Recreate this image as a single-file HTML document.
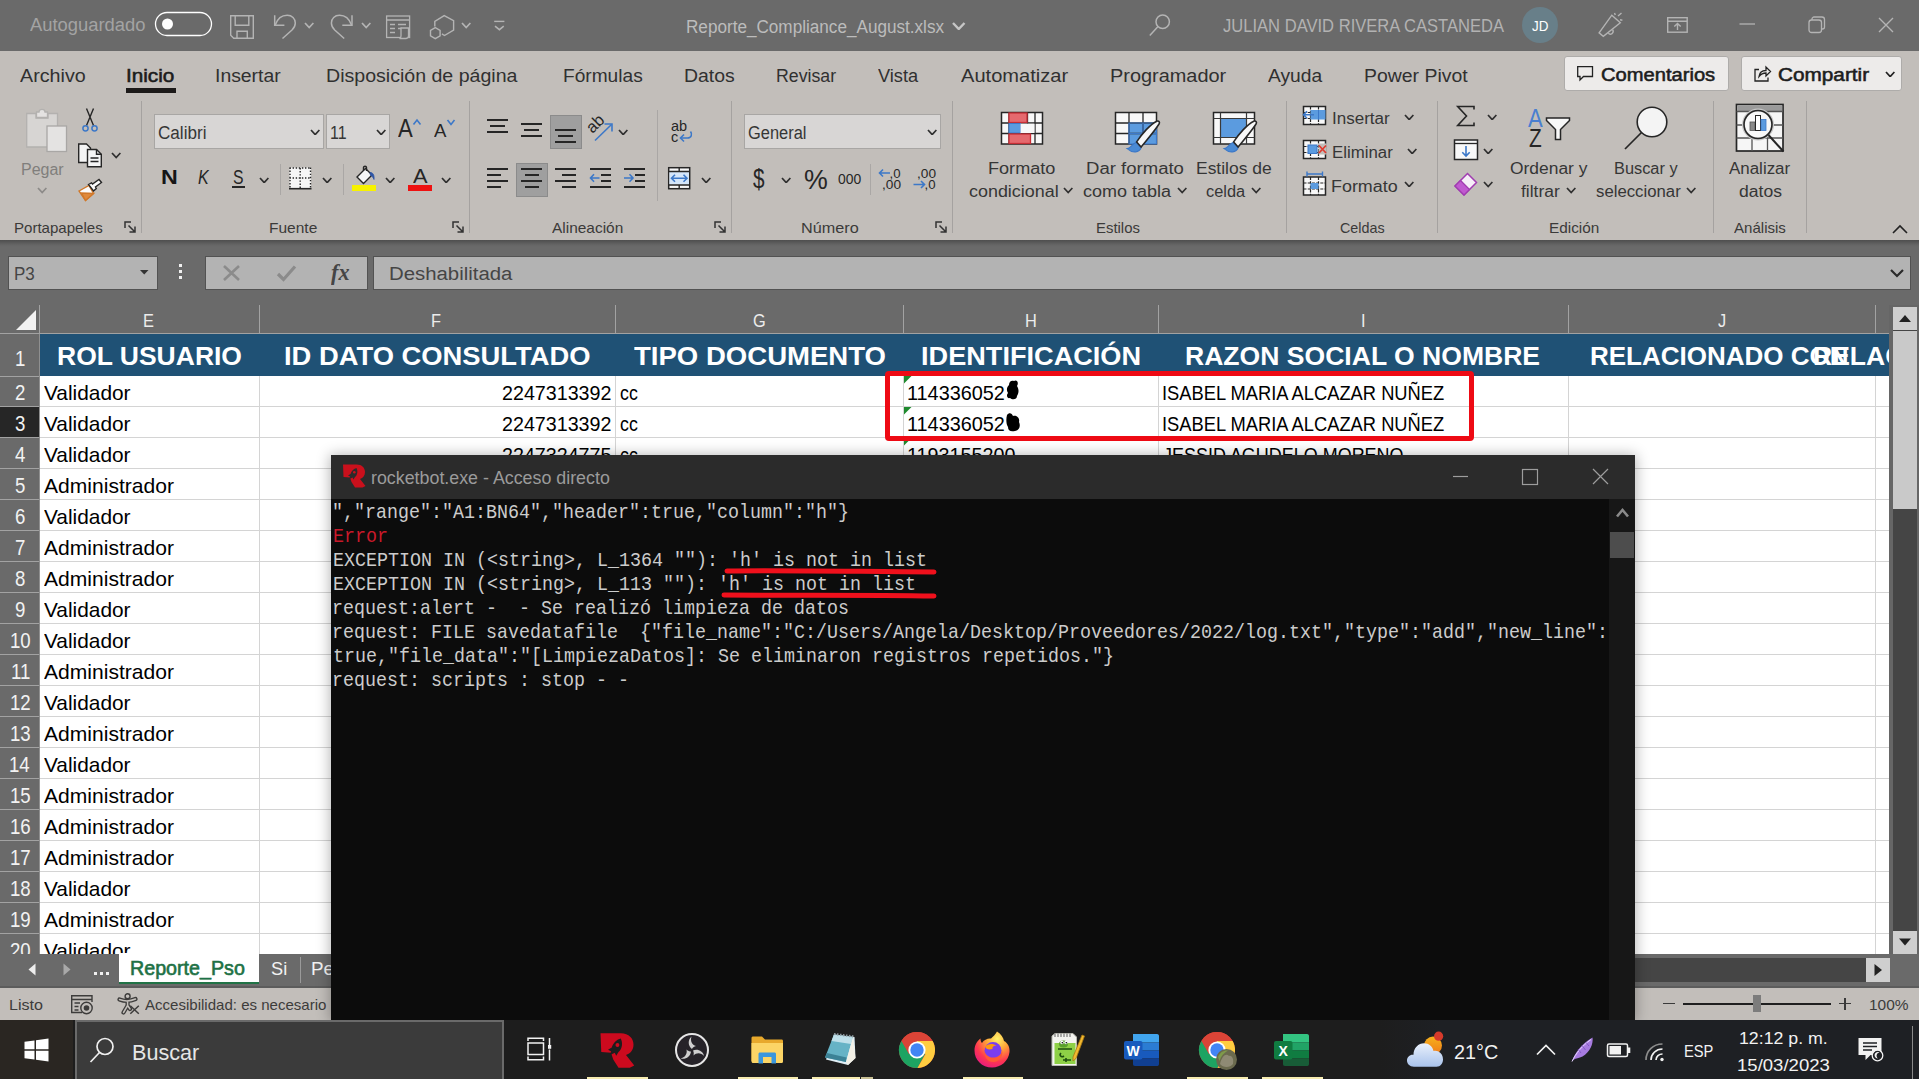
<!DOCTYPE html>
<html lang="es"><head><meta charset="utf-8"><title>Reporte_Compliance_August.xlsx - Excel</title>
<style>
html,body{margin:0;padding:0;}
body{width:1919px;height:1079px;overflow:hidden;position:relative;background:#000;font-family:"Liberation Sans",sans-serif;}
.a{position:absolute;box-sizing:border-box;}
.t{position:absolute;line-height:1;white-space:pre;transform-origin:0 0;}
.mono{font-family:"Liberation Mono",monospace;}
.serif{font-family:"Liberation Serif",serif;}

</style></head><body>
<div class="a" style="left:0px;top:0px;width:1919px;height:51px;background:#6a6a6a;"></div>
<div class="a" style="left:0px;top:51px;width:1919px;height:189px;background:#c2beba;"></div>
<div class="a" style="left:0px;top:240px;width:1919px;height:65px;background:#6a6a6a;background:linear-gradient(#4e4e4e,#666 5px,#6a6a6a 7px);"></div>
<div class="a" style="left:0px;top:305px;width:1919px;height:29px;background:#6a6a6a;"></div>
<div class="a" style="left:0px;top:334px;width:1919px;height:620px;background:#6a6a6a;"></div>
<div class="a" style="left:0px;top:953px;width:1919px;height:34px;background:#6a6a6a;"></div>
<div class="a" style="left:0px;top:987px;width:1919px;height:33px;background:#c2beba;"></div>
<div class="a" style="left:0px;top:1020px;width:1919px;height:59px;background:#1d1d1d;"></div>
<span class="t" style="left:29.50px;top:16.00px;font-size:18px;color:#a3a3a3;transform:scaleX(1.0213);">Autoguardado</span>
<svg class="a" style="left:154px;top:11px;" width="60" height="27" viewBox="0 0 60 27"><rect x="1.5" y="1.5" width="56" height="23" rx="11.5" fill="none" stroke="#fff" stroke-width="1.3"/><circle cx="13.5" cy="13" r="5.5" fill="#fff"/></svg>
<svg class="a" style="left:229px;top:14px;" width="27" height="27" viewBox="0 0 27 27"><g fill="none" stroke="#b4b4b4" stroke-width="1.400"><path d="M1.700 1.700 H24.300 V24.300 H4.700 L1.700 21.300 Z"/><path d="M6.200 1.700 V11.300 H19.800 V1.700"/><path d="M8 24.300 V17.200 H18.300 V24.300"/></g></svg>
<svg class="a" style="left:272px;top:13px;" width="26" height="28" viewBox="0 0 26 28"><g fill="none" stroke="#b4b4b4" stroke-width="1.500"><path d="M2.700 2.200 V12.300 H12.400"/><path d="M3.200 12 C5.500 5.500 10 2.200 15.200 2.200 C20 2.200 23.300 5.500 23.300 10 C23.300 13 22 15 20 17 L10.500 25.500"/></g></svg>
<svg class="a" style="left:303.8px;top:22.2px;" width="10.4" height="6.6" viewBox="0 0 10.4 6.6"><path d="M1 1 L5.2 5.6 L9.4 1" fill="none" stroke="#b4b4b4" stroke-width="1.7"/></svg>
<svg class="a" style="left:329px;top:13px;" width="26" height="28" viewBox="0 0 26 28"><g fill="none" stroke="#b4b4b4" stroke-width="1.500" transform="translate(25.700 0) scale(-1 1)"><path d="M2.700 2.200 V12.300 H12.400"/><path d="M3.200 12 C5.500 5.500 10 2.200 15.200 2.200 C20 2.200 23.300 5.500 23.300 10 C23.300 13 22 15 20 17 L10.500 25.500"/></g></svg>
<svg class="a" style="left:360.8px;top:22.2px;" width="10.4" height="6.6" viewBox="0 0 10.4 6.6"><path d="M1 1 L5.2 5.6 L9.4 1" fill="none" stroke="#b4b4b4" stroke-width="1.7"/></svg>
<svg class="a" style="left:385px;top:14px;" width="27" height="27" viewBox="0 0 27 27"><g fill="none" stroke="#b4b4b4" stroke-width="1.3"><rect x="1.600" y="2" width="23" height="21.500"/><path d="M1.600 6 H24.600 M5 10.500 H10 M13 10.500 H21 M5 14.500 H10 M13 14.500 H17 M5 18.500 H10"/><path d="M16 14 H23.500 V22 C23.500 24 21 24.500 21 24.500 H14.500 C14.500 24.500 16 24 16 22 Z" fill="#6a6a6a"/></g></svg>
<svg class="a" style="left:428px;top:14px;" width="28" height="27" viewBox="0 0 28 27"><g fill="none" stroke="#b4b4b4" stroke-width="1.400"><path d="M6.800 12.500 V7.400 L16.200 1.600 L25.600 6.600 V16 L16.500 21.500 L13.900 19.900"/><path d="M7.300 13.600 L12.100 16.350 V21.850 L7.300 24.600 L2.500 21.850 V16.350 Z"/></g></svg>
<svg class="a" style="left:460.8px;top:22.2px;" width="10.4" height="6.6" viewBox="0 0 10.4 6.6"><path d="M1 1 L5.2 5.6 L9.4 1" fill="none" stroke="#b4b4b4" stroke-width="1.7"/></svg>
<svg class="a" style="left:493px;top:20px;" width="14" height="12" viewBox="0 0 14 12"><path d="M1.200 1.400 H11.400" stroke="#b4b4b4" stroke-width="1.400"/><path d="M2 6.100 L6.400 9.700 L10.750 6.100" fill="none" stroke="#b4b4b4" stroke-width="1.500"/></svg>
<span class="t" style="left:686.25px;top:17.60px;font-size:18px;color:#bcbcbc;transform:scaleX(0.9517);">Reporte_Compliance_August.xlsx</span>
<svg class="a" style="left:952.0px;top:22.1px;" width="13.5" height="8" viewBox="0 0 13.5 8"><path d="M1 1 L6.75 7 L12.5 1" fill="none" stroke="#c6c6c6" stroke-width="2.4"/></svg>
<svg class="a" style="left:1148px;top:13px;" width="24" height="25" viewBox="0 0 24 25"><g fill="none" stroke="#b4b4b4" stroke-width="1.5"><circle cx="14.700" cy="8.700" r="6.700"/><path d="M10 13.500 L1.800 22.500"/></g></svg>
<span class="t" style="left:1223.00px;top:17.00px;font-size:18px;color:#b2b2b2;transform:scaleX(0.9204);">JULIAN DAVID RIVERA CASTANEDA</span>
<div class="a" style="left:1522px;top:7px;width:36px;height:36px;background:#687f89;border-radius:50%;"></div>
<span class="t" style="left:1532.00px;top:18.50px;font-size:14.5px;color:#fff;transform:scaleX(0.9275);">JD</span>
<svg class="a" style="left:1597px;top:12px;" width="28" height="27" viewBox="0 0 28 27"><g fill="none" stroke="#b4b4b4" stroke-width="1.400"><path d="M14.800 3.200 L23.300 10.700 L6.300 24.400 L2.100 20.900 Z"/><path d="M11.300 21.300 C13.500 23.500 17.500 21 15.700 17.700"/><path d="M17.500 1 L18.300 3.100 M21 4 L24.500 1 M23 7.700 L25.400 8.200"/></g></svg>
<svg class="a" style="left:1666px;top:16px;" width="23" height="18" viewBox="0 0 23 18"><g fill="none" stroke="#b4b4b4" stroke-width="1.4"><rect x="1.700" y="1.700" width="19.500" height="14.500"/><path d="M1.700 5.200 H21.200 M11.500 14 V7.500 M8.300 10.500 L11.500 7.500 L14.700 10.500"/></g></svg>
<svg class="a" style="left:1738px;top:22px;" width="19" height="4" viewBox="0 0 19 4"><path d="M1.500 2 H17" stroke="#b4b4b4" stroke-width="1.3"/></svg>
<svg class="a" style="left:1807px;top:15px;" width="20" height="20" viewBox="0 0 20 20"><g fill="none" stroke="#b4b4b4" stroke-width="1.3"><rect x="2" y="5" width="12.500" height="12.500" rx="2.500"/><path d="M5 5 V4 C5 3 6 2 7 2 H15 C16.500 2 17.500 3 17.500 4.500 V12 C17.500 13 16.500 14 15.500 14 H14.500"/></g></svg>
<svg class="a" style="left:1877px;top:16px;" width="18" height="18" viewBox="0 0 18 18"><path d="M2 2 L16 16 M16 2 L2 16" stroke="#b4b4b4" stroke-width="1.400" fill="none"/></svg>
<span class="t" style="left:19.50px;top:67.00px;font-size:18.3px;color:#303030;transform:scaleX(1.0775);">Archivo</span>
<span class="t" style="left:214.94px;top:67.00px;font-size:18.3px;color:#303030;transform:scaleX(1.0593);">Insertar</span>
<span class="t" style="left:326.13px;top:67.00px;font-size:18.3px;color:#303030;transform:scaleX(1.0700);">Disposición de página</span>
<span class="t" style="left:562.95px;top:67.00px;font-size:18.3px;color:#303030;transform:scaleX(1.0460);">Fórmulas</span>
<span class="t" style="left:683.94px;top:67.00px;font-size:18.3px;color:#303030;transform:scaleX(1.0619);">Datos</span>
<span class="t" style="left:776.03px;top:67.00px;font-size:18.3px;color:#303030;transform:scaleX(0.9691);">Revisar</span>
<span class="t" style="left:878.00px;top:67.00px;font-size:18.3px;color:#303030;transform:scaleX(0.9965);">Vista</span>
<span class="t" style="left:961.00px;top:67.00px;font-size:18.3px;color:#303030;transform:scaleX(1.0980);">Automatizar</span>
<span class="t" style="left:1109.91px;top:67.00px;font-size:18.3px;color:#303030;transform:scaleX(1.0890);">Programador</span>
<span class="t" style="left:1267.50px;top:67.00px;font-size:18.3px;color:#303030;transform:scaleX(1.0509);">Ayuda</span>
<span class="t" style="left:1364.44px;top:67.00px;font-size:18.3px;color:#303030;transform:scaleX(1.0626);">Power Pivot</span>
<span class="t" style="left:125.87px;top:67.00px;font-size:18.3px;color:#1c1c1c;transform:scaleX(1.1323);-webkit-text-stroke:0.55px #1c1c1c;">Inicio</span>
<div class="a" style="left:126px;top:88px;width:50px;height:4.5px;background:#1c1a19;"></div>
<div class="a" style="left:1564px;top:55.5px;width:164.5px;height:35px;background:#edebea;border:1px solid #aeacaa;border-radius:3px;"></div>
<svg class="a" style="left:1576px;top:65px;" width="19" height="18" viewBox="0 0 19 18"><path d="M1.700 1.700 H16.500 V11.500 H7.500 L4 15 V11.500 H1.700 Z" fill="none" stroke="#222" stroke-width="1.300"/></svg>
<span class="t" style="left:1601.00px;top:66.00px;font-size:18.3px;color:#1d1d1d;transform:scaleX(1.1015);-webkit-text-stroke:0.55px #1d1d1d;">Comentarios</span>
<div class="a" style="left:1740.5px;top:55.5px;width:161px;height:35px;background:#edebea;border:1px solid #aeacaa;border-radius:3px;"></div>
<svg class="a" style="left:1753px;top:64px;" width="19" height="19" viewBox="0 0 19 19"><g fill="none" stroke="#222" stroke-width="1.300"><path d="M6 5.500 H2 V17 H15 V13.500"/><path d="M6 12.500 C6.500 8.500 9.500 6.500 13 6.500 V3 L17.500 7.500 L13 12 V9 C10 9 8 10 6 12.500 Z"/></g></svg>
<span class="t" style="left:1778.00px;top:66.00px;font-size:18.3px;color:#1d1d1d;transform:scaleX(1.1352);-webkit-text-stroke:0.55px #1d1d1d;">Compartir</span>
<svg class="a" style="left:1884.8px;top:70.7px;" width="10.4" height="6.6" viewBox="0 0 10.4 6.6"><path d="M1 1 L5.2 5.6 L9.4 1" fill="none" stroke="#222" stroke-width="1.7"/></svg>
<div class="a" style="left:141px;top:101px;width:1px;height:132px;background:#a5a2a0;"></div>
<div class="a" style="left:469px;top:101px;width:1px;height:132px;background:#a5a2a0;"></div>
<div class="a" style="left:731px;top:101px;width:1px;height:132px;background:#a5a2a0;"></div>
<div class="a" style="left:952px;top:101px;width:1px;height:132px;background:#a5a2a0;"></div>
<div class="a" style="left:1286px;top:101px;width:1px;height:132px;background:#a5a2a0;"></div>
<div class="a" style="left:1437px;top:101px;width:1px;height:132px;background:#a5a2a0;"></div>
<div class="a" style="left:1713px;top:101px;width:1px;height:132px;background:#a5a2a0;"></div>
<div class="a" style="left:1806px;top:101px;width:1px;height:132px;background:#a5a2a0;"></div>
<div class="a" style="left:280px;top:164px;width:1px;height:31px;background:#aaa7a5;"></div>
<div class="a" style="left:343px;top:164px;width:1px;height:31px;background:#aaa7a5;"></div>
<div class="a" style="left:870px;top:164px;width:1px;height:31px;background:#aaa7a5;"></div>
<div class="a" style="left:657px;top:110px;width:1px;height:91px;background:#aaa7a5;"></div>
<svg class="a" style="left:124px;top:221px;" width="13" height="13" viewBox="0 0 13 13"><g fill="none" stroke="#333" stroke-width="1.500"><path d="M1 7 V1 H7"/><path d="M4.500 4.500 L11 11 M11 5.500 V11 H5.500"/></g></svg>
<svg class="a" style="left:452px;top:221px;" width="13" height="13" viewBox="0 0 13 13"><g fill="none" stroke="#333" stroke-width="1.500"><path d="M1 7 V1 H7"/><path d="M4.500 4.500 L11 11 M11 5.500 V11 H5.500"/></g></svg>
<svg class="a" style="left:714px;top:221px;" width="13" height="13" viewBox="0 0 13 13"><g fill="none" stroke="#333" stroke-width="1.500"><path d="M1 7 V1 H7"/><path d="M4.500 4.500 L11 11 M11 5.500 V11 H5.500"/></g></svg>
<svg class="a" style="left:935px;top:221px;" width="13" height="13" viewBox="0 0 13 13"><g fill="none" stroke="#333" stroke-width="1.500"><path d="M1 7 V1 H7"/><path d="M4.500 4.500 L11 11 M11 5.500 V11 H5.500"/></g></svg>
<span class="t" style="left:13.68px;top:220.70px;font-size:14.8px;color:#3b3a39;transform:scaleX(1.0175);">Portapapeles</span>
<span class="t" style="left:268.95px;top:220.70px;font-size:14.8px;color:#3b3a39;transform:scaleX(1.0482);">Fuente</span>
<span class="t" style="left:552.00px;top:220.70px;font-size:14.8px;color:#3b3a39;transform:scaleX(1.0434);">Alineación</span>
<span class="t" style="left:800.60px;top:220.70px;font-size:14.8px;color:#3b3a39;transform:scaleX(1.0954);">Número</span>
<span class="t" style="left:1096.49px;top:220.70px;font-size:14.8px;color:#3b3a39;transform:scaleX(1.0075);">Estilos</span>
<span class="t" style="left:1339.70px;top:220.70px;font-size:14.8px;color:#3b3a39;transform:scaleX(0.9702);">Celdas</span>
<span class="t" style="left:1548.96px;top:220.70px;font-size:14.8px;color:#3b3a39;transform:scaleX(1.0359);">Edición</span>
<span class="t" style="left:1733.50px;top:220.70px;font-size:14.8px;color:#3b3a39;transform:scaleX(1.0180);">Análisis</span>
<svg class="a" style="left:1891px;top:224px;" width="18" height="11" viewBox="0 0 18 11"><path d="M2 9 L9 2 L16 9" fill="none" stroke="#222" stroke-width="1.600"/></svg>
<svg class="a" style="left:24px;top:105px;" width="46" height="50" viewBox="0 0 46 50"><g stroke-width="1.300">
<path d="M2.700 8.500 H12 V13 H24 V8.500 H33.500 V42 H2.700 Z" fill="#d7d5d3" stroke="#b3b1af"/>
<path d="M12.500 12.500 V7 H15 C15 3.500 21 3.500 21 7 H23.500 V12.500 Z" fill="#e4e2e1" stroke="#b3b1af"/>
<rect x="23" y="21" width="19.500" height="25.500" fill="#e4e3e2" stroke="#a9a7a5"/></g></svg>
<span class="t" style="left:21.07px;top:160.60px;font-size:17.3px;color:#807e7c;transform:scaleX(0.9259);">Pegar</span>
<svg class="a" style="left:36.8px;top:187.3px;" width="10.4" height="6.6" viewBox="0 0 10.4 6.6"><path d="M1 1 L5.2 5.6 L9.4 1" fill="none" stroke="#8c8a88" stroke-width="1.7"/></svg>
<svg class="a" style="left:80px;top:106px;" width="20" height="28" viewBox="0 0 20 28"><g fill="none"><path d="M6.500 2.500 L13.500 19.500 M13.500 2.500 L6.500 19.500" stroke="#262626" stroke-width="1.400"/>
<circle cx="5.500" cy="22.300" r="2.600" stroke="#3c78c8" stroke-width="1.500"/><circle cx="14.500" cy="22.300" r="2.600" stroke="#3c78c8" stroke-width="1.500"/></g></svg>
<svg class="a" style="left:76px;top:142px;" width="28" height="27" viewBox="0 0 28 27"><g stroke="#262626" stroke-width="1.400" fill="#f4f4f4"><path d="M2.700 2 H10.500 L14.500 6 V20.500 H2.700 Z"/>
<path d="M11.500 7.500 H20.500 L25.300 12.300 V24.800 H11.500 Z"/><path d="M20.500 7.500 V12.300 H25.300" fill="none"/><path d="M14.500 16 H22.500 M14.500 19.500 H22.500" fill="none"/></g></svg>
<svg class="a" style="left:110.8px;top:152.3px;" width="10.4" height="6.6" viewBox="0 0 10.4 6.6"><path d="M1 1 L5.2 5.6 L9.4 1" fill="none" stroke="#2f2f2f" stroke-width="1.7"/></svg>
<svg class="a" style="left:76px;top:177px;" width="28" height="26" viewBox="0 0 28 26"><g stroke-width="1.400"><path d="M3 14 L13 8.500 L17.500 16.500 L9.500 23.500 Z" fill="#fbfbfb" stroke="#d0782a"/>
<path d="M5.500 16 L9.500 23.500 L17.500 16.500 Z" fill="#e08a3c" stroke="#d0782a"/>
<path d="M12.500 7.500 L15.500 5.800 L16.500 7 L23 2.500 L25.500 5.500 L19.500 10 L20.300 11.500 L17.500 14 Z" fill="#fbfbfb" stroke="#262626"/></g></svg>
<div class="a" style="left:154px;top:114px;width:170px;height:34.5px;background:#d8d6d5;border:1px solid #a8a6a4;"></div>
<span class="t" style="left:157.50px;top:124.00px;font-size:18px;color:#363636;transform:scaleX(0.9498);">Calibri</span>
<svg class="a" style="left:309.8px;top:128.8px;" width="10.4" height="6.6" viewBox="0 0 10.4 6.6"><path d="M1 1 L5.2 5.6 L9.4 1" fill="none" stroke="#2f2f2f" stroke-width="1.7"/></svg>
<div class="a" style="left:326px;top:114px;width:64px;height:34.5px;background:#d8d6d5;border:1px solid #a8a6a4;"></div>
<span class="t" style="left:330.11px;top:124.00px;font-size:18px;color:#363636;transform:scaleX(0.8883);">11</span>
<svg class="a" style="left:375.8px;top:128.8px;" width="10.4" height="6.6" viewBox="0 0 10.4 6.6"><path d="M1 1 L5.2 5.6 L9.4 1" fill="none" stroke="#2f2f2f" stroke-width="1.7"/></svg>
<span class="t" style="left:398.00px;top:116.00px;font-size:25px;color:#262626;transform:scaleX(0.8824);">A</span>
<svg class="a" style="left:411.5px;top:117.5px;" width="10" height="8" viewBox="0 0 10 8"><path d="M1.500 6.500 L5 2 L8.500 6.500" fill="none" stroke="#3c78c8" stroke-width="1.600"/></svg>
<span class="t" style="left:434.00px;top:121.00px;font-size:19px;color:#262626;transform:scaleX(0.9769);">A</span>
<svg class="a" style="left:446px;top:117.5px;" width="10" height="8" viewBox="0 0 10 8"><path d="M1.500 2 L5 6.500 L8.500 2" fill="none" stroke="#3c78c8" stroke-width="1.600"/></svg>
<span class="t" style="left:160.51px;top:168.00px;font-size:19.5px;color:#161616;font-weight:700;transform:scaleX(1.1917);">N</span>
<span class="t" style="left:197.50px;top:168.00px;font-size:19.5px;color:#262626;font-style:italic;transform:scaleX(0.8214);">K</span>
<span class="t" style="left:232.50px;top:168.00px;font-size:19.5px;color:#262626;transform:scaleX(0.8077);">S</span>
<div class="a" style="left:232px;top:186.3px;width:12.5px;height:1.5px;background:#262626;"></div>
<svg class="a" style="left:258.8px;top:176.8px;" width="10.4" height="6.6" viewBox="0 0 10.4 6.6"><path d="M1 1 L5.2 5.6 L9.4 1" fill="none" stroke="#2f2f2f" stroke-width="1.7"/></svg>
<svg class="a" style="left:288px;top:166px;" width="25" height="25" viewBox="0 0 25 25"><rect x="1.500" y="1.500" width="21.500" height="21.500" fill="#f6f6f6"/>
<g stroke="#262626" stroke-width="1.400" stroke-dasharray="1.400 1.700" fill="none"><path d="M1.500 2 H23 M2 1.500 V22 M22.500 1.500 V22 M12.200 2 V22 M1.500 12 H23"/></g>
<path d="M1 22.700 H23.500" stroke="#262626" stroke-width="1.600"/></svg>
<svg class="a" style="left:321.8px;top:176.8px;" width="10.4" height="6.6" viewBox="0 0 10.4 6.6"><path d="M1 1 L5.2 5.6 L9.4 1" fill="none" stroke="#2f2f2f" stroke-width="1.7"/></svg>
<svg class="a" style="left:354px;top:165px;" width="24" height="20" viewBox="0 0 24 20"><g stroke-width="1.400"><path d="M3 12 L11.500 3.500 L18 10 L9.500 18.500 Z" fill="#f6f6f6" stroke="#262626"/>
<path d="M9.500 5.500 V2.500 C9.500 0.800 12.500 0.800 12.500 2.500 V6" fill="none" stroke="#262626"/>
<path d="M16 7.500 C19 7.500 20.500 10 20 14.500 C19 12 18 11 16.500 10.500 Z" fill="#2e55a5" stroke="#2e55a5" stroke-width="0.800"/></g></svg>
<div class="a" style="left:351.7px;top:185px;width:24.5px;height:6px;background:#f7f200;"></div>
<svg class="a" style="left:384.8px;top:176.8px;" width="10.4" height="6.6" viewBox="0 0 10.4 6.6"><path d="M1 1 L5.2 5.6 L9.4 1" fill="none" stroke="#2f2f2f" stroke-width="1.7"/></svg>
<span class="t" style="left:413.00px;top:164.70px;font-size:21px;color:#262626;transform:scaleX(1.0357);">A</span>
<div class="a" style="left:408px;top:185px;width:24px;height:6px;background:#ee1111;"></div>
<svg class="a" style="left:440.8px;top:176.8px;" width="10.4" height="6.6" viewBox="0 0 10.4 6.6"><path d="M1 1 L5.2 5.6 L9.4 1" fill="none" stroke="#2f2f2f" stroke-width="1.7"/></svg>
<div class="a" style="left:487px;top:119.25px;width:21px;height:1.5px;background:#262626;"></div>
<div class="a" style="left:490px;top:125.25px;width:15px;height:1.5px;background:#262626;"></div>
<div class="a" style="left:487px;top:131.25px;width:21px;height:1.5px;background:#262626;"></div>
<div class="a" style="left:521px;top:123.25px;width:21px;height:1.5px;background:#262626;"></div>
<div class="a" style="left:524px;top:129.25px;width:15px;height:1.5px;background:#262626;"></div>
<div class="a" style="left:521px;top:135.25px;width:21px;height:1.5px;background:#262626;"></div>
<div class="a" style="left:550px;top:115px;width:32px;height:33.5px;background:#9f9f9f;border:1px solid #8b8b8b;"></div>
<div class="a" style="left:555px;top:129.25px;width:21px;height:1.5px;background:#262626;"></div>
<div class="a" style="left:558px;top:135.25px;width:15px;height:1.5px;background:#262626;"></div>
<div class="a" style="left:555px;top:141.25px;width:21px;height:1.5px;background:#262626;"></div>
<svg class="a" style="left:586px;top:116px;" width="30" height="28" viewBox="0 0 30 28"><text x="0" y="0" font-size="16.500" fill="#262626" transform="translate(6.500 18) rotate(-45)" font-family="Liberation Sans, sans-serif">ab</text>
<g fill="none" stroke="#3c78c8" stroke-width="1.600"><path d="M9 24.500 L25.500 8.500"/><path d="M18.500 8 H26 V15.500"/></g></svg>
<svg class="a" style="left:617.8px;top:128.8px;" width="10.4" height="6.6" viewBox="0 0 10.4 6.6"><path d="M1 1 L5.2 5.6 L9.4 1" fill="none" stroke="#2f2f2f" stroke-width="1.7"/></svg>
<div class="a" style="left:487px;top:168.25px;width:21px;height:1.5px;background:#262626;"></div>
<div class="a" style="left:487px;top:174.25px;width:14px;height:1.5px;background:#262626;"></div>
<div class="a" style="left:487px;top:180.25px;width:21px;height:1.5px;background:#262626;"></div>
<div class="a" style="left:487px;top:186.25px;width:14px;height:1.5px;background:#262626;"></div>
<div class="a" style="left:516px;top:163px;width:32px;height:34px;background:#9f9f9f;border:1px solid #8b8b8b;"></div>
<div class="a" style="left:521px;top:168.25px;width:21px;height:1.5px;background:#262626;"></div>
<div class="a" style="left:524.5px;top:174.25px;width:14.0px;height:1.5px;background:#262626;"></div>
<div class="a" style="left:521px;top:180.25px;width:21px;height:1.5px;background:#262626;"></div>
<div class="a" style="left:524.5px;top:186.25px;width:14.0px;height:1.5px;background:#262626;"></div>
<div class="a" style="left:555px;top:168.25px;width:21px;height:1.5px;background:#262626;"></div>
<div class="a" style="left:562px;top:174.25px;width:14px;height:1.5px;background:#262626;"></div>
<div class="a" style="left:555px;top:180.25px;width:21px;height:1.5px;background:#262626;"></div>
<div class="a" style="left:562px;top:186.25px;width:14px;height:1.5px;background:#262626;"></div>
<div class="a" style="left:590px;top:168.25px;width:21px;height:1.5px;background:#262626;"></div>
<div class="a" style="left:601px;top:174.25px;width:10px;height:1.5px;background:#262626;"></div>
<div class="a" style="left:601px;top:180.25px;width:10px;height:1.5px;background:#262626;"></div>
<div class="a" style="left:590px;top:186.25px;width:21px;height:1.5px;background:#262626;"></div>
<svg class="a" style="left:589px;top:172px;" width="12" height="12" viewBox="0 0 12 12"><g fill="none" stroke="#3c78c8" stroke-width="1.600"><path d="M1.500 6 H10.500 M5 2.300 L1.500 6 L5 9.700"/></g></svg>
<div class="a" style="left:624px;top:168.25px;width:21px;height:1.5px;background:#262626;"></div>
<div class="a" style="left:635px;top:174.25px;width:10px;height:1.5px;background:#262626;"></div>
<div class="a" style="left:635px;top:180.25px;width:10px;height:1.5px;background:#262626;"></div>
<div class="a" style="left:624px;top:186.25px;width:21px;height:1.5px;background:#262626;"></div>
<svg class="a" style="left:623px;top:172px;" width="12" height="12" viewBox="0 0 12 12"><g fill="none" stroke="#3c78c8" stroke-width="1.600"><path d="M1 6 H10 M6.500 2.300 L10 6 L6.500 9.700"/></g></svg>
<svg class="a" style="left:669px;top:118px;" width="26" height="27" viewBox="0 0 26 27"><text x="2" y="12.500" font-size="14.500" fill="#262626" font-family="Liberation Sans, sans-serif">ab</text>
<text x="2" y="24.300" font-size="14.500" fill="#262626" font-family="Liberation Sans, sans-serif">c</text>
<g fill="none" stroke="#3c78c8" stroke-width="1.600"><path d="M21.500 13.500 C23.500 16 22.500 20 18.500 20 H11.500"/><path d="M15 16.500 L11.500 20 L15 23.500"/></g></svg>
<svg class="a" style="left:667px;top:166px;" width="25" height="25" viewBox="0 0 25 25"><rect x="1.700" y="1.700" width="21" height="21" fill="#f6f6f6" stroke="#262626" stroke-width="1.500"/>
<rect x="2.500" y="6" width="19.500" height="12.500" fill="#d4e6fa"/>
<path d="M1.700 5.500 H22.700 M1.700 19 H22.700 M12.200 1.700 V5.500 M12.200 19 V22.700" stroke="#262626" stroke-width="1.400" fill="none"/>
<g fill="none" stroke="#3c78c8" stroke-width="1.600"><path d="M4.500 12.300 H20 M8 8.800 L4.500 12.300 L8 15.800 M16.500 8.800 L20 12.300 L16.500 15.800"/></g></svg>
<svg class="a" style="left:700.8px;top:176.8px;" width="10.4" height="6.6" viewBox="0 0 10.4 6.6"><path d="M1 1 L5.2 5.6 L9.4 1" fill="none" stroke="#2f2f2f" stroke-width="1.7"/></svg>
<div class="a" style="left:744px;top:114px;width:197px;height:34.5px;background:#d8d6d5;border:1px solid #a8a6a4;"></div>
<span class="t" style="left:747.50px;top:124.00px;font-size:18px;color:#363636;transform:scaleX(0.9121);">General</span>
<svg class="a" style="left:926.8px;top:128.8px;" width="10.4" height="6.6" viewBox="0 0 10.4 6.6"><path d="M1 1 L5.2 5.6 L9.4 1" fill="none" stroke="#2f2f2f" stroke-width="1.7"/></svg>
<span class="t" style="left:753.00px;top:165.80px;font-size:27px;color:#262626;transform:scaleX(0.7667);">$</span>
<svg class="a" style="left:780.8px;top:176.8px;" width="10.4" height="6.6" viewBox="0 0 10.4 6.6"><path d="M1 1 L5.2 5.6 L9.4 1" fill="none" stroke="#2f2f2f" stroke-width="1.7"/></svg>
<span class="t" style="left:803.74px;top:165.50px;font-size:28px;color:#262626;transform:scaleX(0.9565);">%</span>
<span class="t" style="left:838.00px;top:171.50px;font-size:14.7px;color:#262626;transform:scaleX(0.9451);">000</span>
<svg class="a" style="left:877px;top:165px;" width="27" height="27" viewBox="0 0 27 27"><g font-family="Liberation Sans, sans-serif" font-size="13" fill="#262626"><text x="12.500" y="12.500" textLength="11" lengthAdjust="spacingAndGlyphs">,0</text><text x="5" y="24" textLength="19" lengthAdjust="spacingAndGlyphs">,00</text></g>
<g fill="none" stroke="#3c78c8" stroke-width="1.600"><path d="M2.500 8 H13 M6 4.500 L2.500 8 L6 11.500"/></g></svg>
<svg class="a" style="left:911px;top:165px;" width="27" height="27" viewBox="0 0 27 27"><g font-family="Liberation Sans, sans-serif" font-size="13" fill="#262626"><text x="6" y="12.500" textLength="19" lengthAdjust="spacingAndGlyphs">,00</text><text x="13.500" y="24" textLength="11" lengthAdjust="spacingAndGlyphs">,0</text></g>
<g fill="none" stroke="#3c78c8" stroke-width="1.600"><path d="M2.500 19.500 H13.500 M10 16 L13.500 19.500 L10 23"/></g></svg>
<svg class="a" style="left:1000px;top:111px;" width="44" height="35" viewBox="0 0 44 35"><rect x="1.500" y="1.500" width="41" height="31.500" fill="#f8f8f8" stroke="#262626" stroke-width="1.500"/>
<path d="M1.500 12 H42.500 M1.500 22.500 H42.500 M9 1.500 V33 M27.500 1.500 V33 M35 1.500 V33" stroke="#262626" stroke-width="1.300" fill="none"/>
<rect x="9" y="2" width="18" height="9.500" fill="#e5696e" stroke="#c82f36" stroke-width="1.300"/>
<rect x="9" y="12.500" width="11.500" height="9.500" fill="#5b9bdf" stroke="#3c78c8" stroke-width="1"/>
<rect x="20.500" y="12.700" width="14" height="9.300" fill="#f8f8f8"/>
<rect x="9" y="23" width="21.500" height="9.500" fill="#e5696e" stroke="#c82f36" stroke-width="1.300"/></svg>
<span class="t" style="left:987.95px;top:159.50px;font-size:17.3px;color:#363636;transform:scaleX(1.0474);">Formato</span>
<span class="t" style="left:968.70px;top:183.00px;font-size:17.3px;color:#363636;transform:scaleX(1.0371);">condicional</span>
<svg class="a" style="left:1062.8px;top:187.3px;" width="10.4" height="6.6" viewBox="0 0 10.4 6.6"><path d="M1 1 L5.2 5.6 L9.4 1" fill="none" stroke="#2f2f2f" stroke-width="1.7"/></svg>
<svg class="a" style="left:1114px;top:111px;" width="50" height="43" viewBox="0 0 50 43"><rect x="1.500" y="1.500" width="41" height="31.500" fill="#f8f8f8" stroke="#262626" stroke-width="1.500"/>
<rect x="15" y="12" width="27.500" height="21" fill="#5b9bdf"/>
<path d="M1.500 12 H42.500 M1.500 22.500 H42.500 M15 1.500 V33 M29 1.500 V33" stroke="#262626" stroke-width="1.300" fill="none"/>
<path d="M15 12 H42.500 V33 H15 Z M15 22.500 H42.500 M29 12 V33" stroke="#3c78c8" stroke-width="1.200" fill="none"/>
<g transform="translate(12 8.5) scale(1.12)"><path d="M1 26 C4 26 5 22 9 20.500 L13.500 25 C12 29.500 6 30.500 1 26 Z" fill="#4a8ad4" stroke="#3c78c8" stroke-width="1"/>
<path d="M9.500 20 C14 13 22 4 27.500 1.500 C29.500 1 30.500 2.500 29.500 4 C25 11 18 19 13.500 24.500 Z" fill="#f8f8f8" stroke="#262626" stroke-width="1.400"/></g></svg>
<span class="t" style="left:1086.43px;top:159.50px;font-size:17.3px;color:#363636;transform:scaleX(1.0734);">Dar formato</span>
<span class="t" style="left:1082.50px;top:183.00px;font-size:17.3px;color:#363636;transform:scaleX(1.0421);">como tabla</span>
<svg class="a" style="left:1176.5px;top:187.3px;" width="10.4" height="6.6" viewBox="0 0 10.4 6.6"><path d="M1 1 L5.2 5.6 L9.4 1" fill="none" stroke="#2f2f2f" stroke-width="1.7"/></svg>
<svg class="a" style="left:1212px;top:111px;" width="50" height="43" viewBox="0 0 50 43"><rect x="1.500" y="1.500" width="41" height="31.500" fill="#f8f8f8" stroke="#262626" stroke-width="1.500"/>
<rect x="8.500" y="7.500" width="26" height="19" fill="#5b9bdf"/>
<path d="M1.500 7.500 H42.500 M1.500 26.500 H42.500 M8.500 1.500 V33 M34.500 1.500 V33" stroke="#3a3a3a" stroke-width="1.200" fill="none"/>
<g transform="translate(11 8.5) scale(1.12)"><path d="M1 26 C4 26 5 22 9 20.500 L13.500 25 C12 29.500 6 30.500 1 26 Z" fill="#4a8ad4" stroke="#3c78c8" stroke-width="1"/>
<path d="M9.500 20 C14 13 22 4 27.500 1.500 C29.500 1 30.500 2.500 29.500 4 C25 11 18 19 13.500 24.500 Z" fill="#f8f8f8" stroke="#262626" stroke-width="1.400"/></g></svg>
<span class="t" style="left:1195.99px;top:159.50px;font-size:17.3px;color:#363636;transform:scaleX(1.0094);">Estilos de</span>
<span class="t" style="left:1205.50px;top:183.00px;font-size:17.3px;color:#363636;transform:scaleX(0.9472);">celda</span>
<svg class="a" style="left:1250.8px;top:187.3px;" width="10.4" height="6.6" viewBox="0 0 10.4 6.6"><path d="M1 1 L5.2 5.6 L9.4 1" fill="none" stroke="#2f2f2f" stroke-width="1.7"/></svg>
<svg class="a" style="left:1302px;top:105px;" width="27" height="23" viewBox="0 0 27 23"><rect x="1.500" y="1.500" width="22" height="18" fill="#f8f8f8" stroke="#262626" stroke-width="1.500"/>
<path d="M1.500 7.500 H23.500 M1.500 13.500 H23.500 M8.500 1.500 V19.500 M16.500 1.500 V19.500" stroke="#262626" stroke-width="1.200" stroke-dasharray="3 1.200" fill="none"/><rect x="8.500" y="5" width="15" height="9.500" fill="#5b9bdf"/><path d="M16.500 5 V14.500" stroke="#3c78c8" stroke-width="1"/>
<g fill="none" stroke="#3c78c8" stroke-width="1.600"><path d="M1.500 9.700 H12 M5 6.200 L1.500 9.700 L5 13.200"/></g></svg>
<span class="t" style="left:1331.51px;top:109.50px;font-size:17.3px;color:#363636;transform:scaleX(0.9856);">Insertar</span>
<svg class="a" style="left:1403.5px;top:113.8px;" width="10.4" height="6.6" viewBox="0 0 10.4 6.6"><path d="M1 1 L5.2 5.6 L9.4 1" fill="none" stroke="#2f2f2f" stroke-width="1.7"/></svg>
<svg class="a" style="left:1302px;top:139px;" width="27" height="23" viewBox="0 0 27 23"><rect x="1.500" y="1.500" width="22" height="18" fill="#f8f8f8" stroke="#262626" stroke-width="1.500"/>
<path d="M1.500 7.500 H23.500 M1.500 13.500 H23.500 M8.500 1.500 V19.500 M16.500 1.500 V19.500" stroke="#262626" stroke-width="1.200" stroke-dasharray="3 1.200" fill="none"/><rect x="6" y="6" width="9" height="8.500" fill="#5b9bdf" stroke="#3c78c8" stroke-width="1"/>
<rect x="16.500" y="4.500" width="8" height="11" fill="#c2beba"/>
<path d="M17 6.500 L24 14 M24 6.500 L17 14" stroke="#e03a2e" stroke-width="1.700" fill="none"/></svg>
<span class="t" style="left:1331.53px;top:143.70px;font-size:17.3px;color:#363636;transform:scaleX(0.9730);">Eliminar</span>
<svg class="a" style="left:1406.8px;top:147.8px;" width="10.4" height="6.6" viewBox="0 0 10.4 6.6"><path d="M1 1 L5.2 5.6 L9.4 1" fill="none" stroke="#2f2f2f" stroke-width="1.7"/></svg>
<svg class="a" style="left:1302px;top:171px;" width="27" height="27" viewBox="0 0 27 27"><g transform="translate(0 4.500)"><rect x="1.500" y="1.500" width="22" height="18" fill="#f8f8f8" stroke="#262626" stroke-width="1.500"/>
<path d="M1.500 7.500 H23.500 M1.500 13.500 H23.500 M8.500 1.500 V19.500 M16.500 1.500 V19.500" stroke="#262626" stroke-width="1.200" stroke-dasharray="3 1.200" fill="none"/><rect x="8.500" y="7.500" width="8" height="6" fill="#5b9bdf"/></g>
<path d="M5 3 H20.500 M5 0.500 V5.500 M20.500 0.500 V5.500" stroke="#3c78c8" stroke-width="1.400" fill="none"/></svg>
<span class="t" style="left:1331.46px;top:178.00px;font-size:17.3px;color:#363636;transform:scaleX(1.0362);">Formato</span>
<svg class="a" style="left:1403.5px;top:180.8px;" width="10.4" height="6.6" viewBox="0 0 10.4 6.6"><path d="M1 1 L5.2 5.6 L9.4 1" fill="none" stroke="#2f2f2f" stroke-width="1.7"/></svg>
<svg class="a" style="left:1455px;top:104px;" width="22" height="24" viewBox="0 0 22 24"><path d="M19 5.500 V2.500 H2.700 L11.500 12 L2.700 21.500 H19 V18.500" fill="none" stroke="#262626" stroke-width="1.600"/></svg>
<svg class="a" style="left:1486.8px;top:113.8px;" width="10.4" height="6.6" viewBox="0 0 10.4 6.6"><path d="M1 1 L5.2 5.6 L9.4 1" fill="none" stroke="#2f2f2f" stroke-width="1.7"/></svg>
<svg class="a" style="left:1453px;top:138px;" width="27" height="24" viewBox="0 0 27 24"><rect x="1.500" y="2" width="23" height="19.500" fill="#f8f8f8" stroke="#262626" stroke-width="1.500"/><path d="M1.500 5.500 H24.500" stroke="#262626" stroke-width="1.300"/>
<g fill="none" stroke="#3c78c8" stroke-width="1.600"><path d="M13 8 V18 M9.300 14.300 L13 18 L16.700 14.300"/></g></svg>
<svg class="a" style="left:1482.8px;top:147.8px;" width="10.4" height="6.6" viewBox="0 0 10.4 6.6"><path d="M1 1 L5.2 5.6 L9.4 1" fill="none" stroke="#2f2f2f" stroke-width="1.7"/></svg>
<svg class="a" style="left:1453px;top:171px;" width="26" height="27" viewBox="0 0 26 27"><path d="M2 15 L14.500 2.500 L23.500 11.500 L11 24 Z" fill="#f6eef8" stroke="#a03cb0" stroke-width="1.500"/>
<path d="M2 15 L7.500 9.500 L16.500 18.500 L11 24 Z" fill="#c05ad0" stroke="#a03cb0" stroke-width="1.300"/></svg>
<svg class="a" style="left:1482.8px;top:181.3px;" width="10.4" height="6.6" viewBox="0 0 10.4 6.6"><path d="M1 1 L5.2 5.6 L9.4 1" fill="none" stroke="#2f2f2f" stroke-width="1.7"/></svg>
<span class="t" style="left:1528.00px;top:105.50px;font-size:25px;color:#4a7fd0;transform:scaleX(0.8824);">A</span>
<span class="t" style="left:1528.50px;top:126.00px;font-size:25px;color:#262626;transform:scaleX(0.8333);">Z</span>
<svg class="a" style="left:1544px;top:115px;" width="28" height="28" viewBox="0 0 28 28"><path d="M2.500 3 H25.500 V5.500 L16.500 14.500 V24.500 H11.500 V14.500 L2.500 5.500 Z" fill="#f8f8f8" stroke="#262626" stroke-width="1.500"/></svg>
<span class="t" style="left:1509.70px;top:159.50px;font-size:17.3px;color:#363636;transform:scaleX(1.0078);">Ordenar y</span>
<span class="t" style="left:1521.00px;top:183.00px;font-size:17.3px;color:#363636;transform:scaleX(1.0091);">filtrar</span>
<svg class="a" style="left:1565.8px;top:187.3px;" width="10.4" height="6.6" viewBox="0 0 10.4 6.6"><path d="M1 1 L5.2 5.6 L9.4 1" fill="none" stroke="#2f2f2f" stroke-width="1.7"/></svg>
<svg class="a" style="left:1622px;top:104px;" width="48" height="48" viewBox="0 0 48 48"><circle cx="30" cy="18" r="14.800" fill="#f4f4f4" stroke="#262626" stroke-width="1.600"/><path d="M19.500 28.500 L3 45" stroke="#262626" stroke-width="1.700"/></svg>
<span class="t" style="left:1614.05px;top:159.50px;font-size:17.3px;color:#363636;transform:scaleX(0.9461);">Buscar y</span>
<span class="t" style="left:1595.50px;top:183.00px;font-size:17.3px;color:#363636;transform:scaleX(0.9697);">seleccionar</span>
<svg class="a" style="left:1685.8px;top:187.3px;" width="10.4" height="6.6" viewBox="0 0 10.4 6.6"><path d="M1 1 L5.2 5.6 L9.4 1" fill="none" stroke="#2f2f2f" stroke-width="1.7"/></svg>
<svg class="a" style="left:1735px;top:103px;" width="51" height="51" viewBox="0 0 51 51"><rect x="1.500" y="1.500" width="46.500" height="46.500" fill="#f6f6f6" stroke="#262626" stroke-width="1.700"/>
<rect x="2.300" y="2.300" width="45" height="6" fill="#9a9a9a"/>
<path d="M1.500 8.500 H48 M1.500 22 H48 M1.500 35 H48 M17 8.500 V48 M32.500 8.500 V48" stroke="#555" stroke-width="1.300" fill="none"/>
<circle cx="23" cy="21.500" r="14.500" fill="#f8f8f8" stroke="#c8c8c8" stroke-width="3"/>
<circle cx="23" cy="21.500" r="14" fill="none" stroke="#262626" stroke-width="1.600"/>
<rect x="15" y="19" width="5" height="8.500" fill="#8a8a8a" stroke="#555" stroke-width="0.800"/>
<rect x="20.500" y="12.500" width="5" height="15" fill="#fff" stroke="#262626" stroke-width="1"/>
<rect x="26" y="16.500" width="5" height="11" fill="#5b9bdf" stroke="#3c78c8" stroke-width="0.800"/>
<path d="M33.500 32 L48.500 48.500" stroke="#262626" stroke-width="2"/></svg>
<span class="t" style="left:1729.40px;top:159.90px;font-size:17.3px;color:#363636;transform:scaleX(0.9796);">Analizar</span>
<span class="t" style="left:1738.70px;top:183.00px;font-size:17.3px;color:#363636;transform:scaleX(1.0156);">datos</span>
<div class="a" style="left:8px;top:256px;width:150px;height:33.5px;background:#b3b3b3;border:1px solid #525252;"></div>
<span class="t" style="left:14.04px;top:266.00px;font-size:17.6px;color:#454545;transform:scaleX(0.9646);">P3</span>
<svg class="a" style="left:139px;top:269px;" width="11" height="7" viewBox="0 0 11 7"><path d="M1 1 H9.500 L5.250 5.500 Z" fill="#333"/></svg>
<div class="a" style="left:179px;top:264px;width:2.6px;height:2.6px;background:#f0f0f0;"></div>
<div class="a" style="left:179px;top:270px;width:2.6px;height:2.6px;background:#f0f0f0;"></div>
<div class="a" style="left:179px;top:276px;width:2.6px;height:2.6px;background:#f0f0f0;"></div>
<div class="a" style="left:204.5px;top:256px;width:163px;height:33.5px;background:#b3b3b3;border:1px solid #525252;"></div>
<svg class="a" style="left:222px;top:264px;" width="19" height="18" viewBox="0 0 19 18"><path d="M2 2 L17 16 M17 2 L2 16" stroke="#8b8b8b" stroke-width="2.600" fill="none"/></svg>
<svg class="a" style="left:276px;top:264px;" width="21" height="18" viewBox="0 0 21 18"><path d="M2 10 L7.500 15.500 L19 2.500" stroke="#8b8b8b" stroke-width="3.200" fill="none"/></svg>
<span class="t serif" style="left:330.50px;top:260.50px;font-size:23px;color:#454545;font-weight:700;font-style:italic;transform:scaleX(0.9647);">fx</span>
<div class="a" style="left:372.5px;top:256px;width:1538px;height:33.5px;background:#b3b3b3;border:1px solid #525252;"></div>
<span class="t" style="left:388.84px;top:266.00px;font-size:17.6px;color:#454545;transform:scaleX(1.1576);">Deshabilitada</span>
<svg class="a" style="left:1889px;top:268px;" width="16" height="10" viewBox="0 0 16 10"><path d="M2 2 L8 8 L14 2" stroke="#2a2a2a" stroke-width="2.200" fill="none"/></svg>
<div class="a" style="left:0px;top:333px;width:1890px;height:1px;background:#a2a2a2;"></div>
<div class="a" style="left:39px;top:305px;width:1px;height:29px;background:#a2a2a2;"></div>
<div class="a" style="left:259px;top:305px;width:1px;height:29px;background:#a2a2a2;"></div>
<div class="a" style="left:615px;top:305px;width:1px;height:29px;background:#a2a2a2;"></div>
<div class="a" style="left:903px;top:305px;width:1px;height:29px;background:#a2a2a2;"></div>
<div class="a" style="left:1158px;top:305px;width:1px;height:29px;background:#a2a2a2;"></div>
<div class="a" style="left:1568px;top:305px;width:1px;height:29px;background:#a2a2a2;"></div>
<div class="a" style="left:1875px;top:305px;width:1px;height:29px;background:#a2a2a2;"></div>
<svg class="a" style="left:15px;top:309px;" width="22" height="22" viewBox="0 0 22 22"><path d="M21 1 V21 H1 Z" fill="#f2f2f2"/></svg>
<span class="t" style="left:143.42px;top:312.50px;font-size:17.6px;color:#ececec;transform:scaleX(0.9300);">E</span>
<span class="t" style="left:431.42px;top:312.50px;font-size:17.6px;color:#ececec;transform:scaleX(0.9300);">F</span>
<span class="t" style="left:753.46px;top:312.50px;font-size:17.6px;color:#ececec;transform:scaleX(0.9300);">G</span>
<span class="t" style="left:1024.65px;top:312.50px;font-size:17.6px;color:#ececec;transform:scaleX(0.9300);">H</span>
<span class="t" style="left:1361.17px;top:312.50px;font-size:17.6px;color:#ececec;transform:scaleX(0.9300);">I</span>
<span class="t" style="left:1717.98px;top:312.50px;font-size:17.6px;color:#ececec;transform:scaleX(0.9300);">J</span>
<div class="a" style="left:40px;top:376px;width:1849px;height:578px;background:#fff;"></div>
<div class="a" style="left:40px;top:334px;width:1849px;height:42px;background:#1f5175;"></div>
<div class="a" style="left:0px;top:334px;width:39px;height:42px;background:#6a6a6a;"></div>
<span class="t" style="left:15.02px;top:347.50px;font-size:21.2px;color:#f2f2f2;transform:scaleX(0.8800);">1</span>
<div class="a" style="left:0px;top:375.5px;width:39px;height:1px;background:#a2a2a2;"></div>
<div class="a" style="left:40px;top:406px;width:1849px;height:1px;background:#d4d4d4;"></div>
<div class="a" style="left:0px;top:406px;width:39px;height:1px;background:#a2a2a2;"></div>
<div class="a" style="left:40px;top:437px;width:1849px;height:1px;background:#d4d4d4;"></div>
<div class="a" style="left:0px;top:437px;width:39px;height:1px;background:#a2a2a2;"></div>
<div class="a" style="left:0px;top:407px;width:39px;height:30px;background:#262626;"></div>
<div class="a" style="left:40px;top:468px;width:1849px;height:1px;background:#d4d4d4;"></div>
<div class="a" style="left:0px;top:468px;width:39px;height:1px;background:#a2a2a2;"></div>
<div class="a" style="left:40px;top:499px;width:1849px;height:1px;background:#d4d4d4;"></div>
<div class="a" style="left:0px;top:499px;width:39px;height:1px;background:#a2a2a2;"></div>
<div class="a" style="left:40px;top:530px;width:1849px;height:1px;background:#d4d4d4;"></div>
<div class="a" style="left:0px;top:530px;width:39px;height:1px;background:#a2a2a2;"></div>
<div class="a" style="left:40px;top:561px;width:1849px;height:1px;background:#d4d4d4;"></div>
<div class="a" style="left:0px;top:561px;width:39px;height:1px;background:#a2a2a2;"></div>
<div class="a" style="left:40px;top:592px;width:1849px;height:1px;background:#d4d4d4;"></div>
<div class="a" style="left:0px;top:592px;width:39px;height:1px;background:#a2a2a2;"></div>
<div class="a" style="left:40px;top:623px;width:1849px;height:1px;background:#d4d4d4;"></div>
<div class="a" style="left:0px;top:623px;width:39px;height:1px;background:#a2a2a2;"></div>
<div class="a" style="left:40px;top:654px;width:1849px;height:1px;background:#d4d4d4;"></div>
<div class="a" style="left:0px;top:654px;width:39px;height:1px;background:#a2a2a2;"></div>
<div class="a" style="left:40px;top:685px;width:1849px;height:1px;background:#d4d4d4;"></div>
<div class="a" style="left:0px;top:685px;width:39px;height:1px;background:#a2a2a2;"></div>
<div class="a" style="left:40px;top:716px;width:1849px;height:1px;background:#d4d4d4;"></div>
<div class="a" style="left:0px;top:716px;width:39px;height:1px;background:#a2a2a2;"></div>
<div class="a" style="left:40px;top:747px;width:1849px;height:1px;background:#d4d4d4;"></div>
<div class="a" style="left:0px;top:747px;width:39px;height:1px;background:#a2a2a2;"></div>
<div class="a" style="left:40px;top:778px;width:1849px;height:1px;background:#d4d4d4;"></div>
<div class="a" style="left:0px;top:778px;width:39px;height:1px;background:#a2a2a2;"></div>
<div class="a" style="left:40px;top:809px;width:1849px;height:1px;background:#d4d4d4;"></div>
<div class="a" style="left:0px;top:809px;width:39px;height:1px;background:#a2a2a2;"></div>
<div class="a" style="left:40px;top:840px;width:1849px;height:1px;background:#d4d4d4;"></div>
<div class="a" style="left:0px;top:840px;width:39px;height:1px;background:#a2a2a2;"></div>
<div class="a" style="left:40px;top:871px;width:1849px;height:1px;background:#d4d4d4;"></div>
<div class="a" style="left:0px;top:871px;width:39px;height:1px;background:#a2a2a2;"></div>
<div class="a" style="left:40px;top:902px;width:1849px;height:1px;background:#d4d4d4;"></div>
<div class="a" style="left:0px;top:902px;width:39px;height:1px;background:#a2a2a2;"></div>
<div class="a" style="left:40px;top:933px;width:1849px;height:1px;background:#d4d4d4;"></div>
<div class="a" style="left:0px;top:933px;width:39px;height:1px;background:#a2a2a2;"></div>
<div class="a" style="left:259px;top:376px;width:1px;height:578px;background:#d4d4d4;"></div>
<div class="a" style="left:615px;top:376px;width:1px;height:578px;background:#d4d4d4;"></div>
<div class="a" style="left:903px;top:376px;width:1px;height:578px;background:#d4d4d4;"></div>
<div class="a" style="left:1158px;top:376px;width:1px;height:578px;background:#d4d4d4;"></div>
<div class="a" style="left:1568px;top:376px;width:1px;height:578px;background:#d4d4d4;"></div>
<div class="a" style="left:1875px;top:376px;width:1px;height:578px;background:#d4d4d4;"></div>
<div class="a" style="left:39px;top:334px;width:1px;height:620px;background:#8f8f8f;"></div>
<span class="t" style="left:15.02px;top:381.50px;font-size:21.2px;color:#f2f2f2;transform:scaleX(0.8800);">2</span>
<span class="t" style="left:43.80px;top:382.50px;font-size:20.6px;color:#000;transform:scaleX(1.0126);">Validador</span>
<span class="t" style="left:15.46px;top:412.50px;font-size:21.2px;color:#f2f2f2;transform:scaleX(0.8800);">3</span>
<span class="t" style="left:43.80px;top:413.50px;font-size:20.6px;color:#000;transform:scaleX(1.0126);">Validador</span>
<span class="t" style="left:15.02px;top:443.50px;font-size:21.2px;color:#f2f2f2;transform:scaleX(0.8800);">4</span>
<span class="t" style="left:43.80px;top:444.50px;font-size:20.6px;color:#000;transform:scaleX(1.0126);">Validador</span>
<span class="t" style="left:15.46px;top:474.50px;font-size:21.2px;color:#f2f2f2;transform:scaleX(0.8800);">5</span>
<span class="t" style="left:43.80px;top:475.50px;font-size:20.6px;color:#000;transform:scaleX(1.0229);">Administrador</span>
<span class="t" style="left:15.02px;top:505.50px;font-size:21.2px;color:#f2f2f2;transform:scaleX(0.8800);">6</span>
<span class="t" style="left:43.80px;top:506.50px;font-size:20.6px;color:#000;transform:scaleX(1.0126);">Validador</span>
<span class="t" style="left:15.02px;top:536.50px;font-size:21.2px;color:#f2f2f2;transform:scaleX(0.8800);">7</span>
<span class="t" style="left:43.80px;top:537.50px;font-size:20.6px;color:#000;transform:scaleX(1.0229);">Administrador</span>
<span class="t" style="left:15.46px;top:567.50px;font-size:21.2px;color:#f2f2f2;transform:scaleX(0.8800);">8</span>
<span class="t" style="left:43.80px;top:568.50px;font-size:20.6px;color:#000;transform:scaleX(1.0229);">Administrador</span>
<span class="t" style="left:15.02px;top:598.50px;font-size:21.2px;color:#f2f2f2;transform:scaleX(0.8800);">9</span>
<span class="t" style="left:43.80px;top:599.50px;font-size:20.6px;color:#000;transform:scaleX(1.0126);">Validador</span>
<span class="t" style="left:9.84px;top:629.50px;font-size:21.2px;color:#f2f2f2;transform:scaleX(0.8800);">10</span>
<span class="t" style="left:43.80px;top:630.50px;font-size:20.6px;color:#000;transform:scaleX(1.0126);">Validador</span>
<span class="t" style="left:10.53px;top:660.50px;font-size:21.2px;color:#f2f2f2;transform:scaleX(0.8800);">11</span>
<span class="t" style="left:43.80px;top:661.50px;font-size:20.6px;color:#000;transform:scaleX(1.0229);">Administrador</span>
<span class="t" style="left:9.84px;top:691.50px;font-size:21.2px;color:#f2f2f2;transform:scaleX(0.8800);">12</span>
<span class="t" style="left:43.80px;top:692.50px;font-size:20.6px;color:#000;transform:scaleX(1.0126);">Validador</span>
<span class="t" style="left:9.84px;top:722.50px;font-size:21.2px;color:#f2f2f2;transform:scaleX(0.8800);">13</span>
<span class="t" style="left:43.80px;top:723.50px;font-size:20.6px;color:#000;transform:scaleX(1.0229);">Administrador</span>
<span class="t" style="left:9.40px;top:753.50px;font-size:21.2px;color:#f2f2f2;transform:scaleX(0.8800);">14</span>
<span class="t" style="left:43.80px;top:754.50px;font-size:20.6px;color:#000;transform:scaleX(1.0126);">Validador</span>
<span class="t" style="left:9.84px;top:784.50px;font-size:21.2px;color:#f2f2f2;transform:scaleX(0.8800);">15</span>
<span class="t" style="left:43.80px;top:785.50px;font-size:20.6px;color:#000;transform:scaleX(1.0229);">Administrador</span>
<span class="t" style="left:9.84px;top:815.50px;font-size:21.2px;color:#f2f2f2;transform:scaleX(0.8800);">16</span>
<span class="t" style="left:43.80px;top:816.50px;font-size:20.6px;color:#000;transform:scaleX(1.0229);">Administrador</span>
<span class="t" style="left:9.84px;top:846.50px;font-size:21.2px;color:#f2f2f2;transform:scaleX(0.8800);">17</span>
<span class="t" style="left:43.80px;top:847.50px;font-size:20.6px;color:#000;transform:scaleX(1.0229);">Administrador</span>
<span class="t" style="left:9.84px;top:877.50px;font-size:21.2px;color:#f2f2f2;transform:scaleX(0.8800);">18</span>
<span class="t" style="left:43.80px;top:878.50px;font-size:20.6px;color:#000;transform:scaleX(1.0126);">Validador</span>
<span class="t" style="left:9.84px;top:908.50px;font-size:21.2px;color:#f2f2f2;transform:scaleX(0.8800);">19</span>
<span class="t" style="left:43.80px;top:909.50px;font-size:20.6px;color:#000;transform:scaleX(1.0229);">Administrador</span>
<span class="t" style="left:9.84px;top:939.50px;font-size:21.2px;color:#f2f2f2;transform:scaleX(0.8800);">20</span>
<span class="t" style="left:43.80px;top:940.50px;font-size:20.6px;color:#000;transform:scaleX(1.0126);">Validador</span>
<span class="t" style="left:56.99px;top:343.00px;font-size:26.3px;color:#fff;font-weight:700;transform:scaleX(1.0075);">ROL USUARIO</span>
<span class="t" style="left:283.96px;top:343.00px;font-size:26.3px;color:#fff;font-weight:700;transform:scaleX(1.0404);">ID DATO CONSULTADO</span>
<span class="t" style="left:634.00px;top:343.00px;font-size:26.3px;color:#fff;font-weight:700;transform:scaleX(1.0474);">TIPO DOCUMENTO</span>
<span class="t" style="left:920.97px;top:343.00px;font-size:26.3px;color:#fff;font-weight:700;transform:scaleX(1.0317);">IDENTIFICACIÓN</span>
<span class="t" style="left:1184.99px;top:343.00px;font-size:26.3px;color:#fff;font-weight:700;transform:scaleX(1.0099);">RAZON SOCIAL O NOMBRE</span>
<div class="a" style="left:1569px;top:334px;width:320px;height:42px;overflow:hidden;"></div>
<span class="t" style="left:1590.41px;top:343.00px;font-size:26.3px;color:#fff;font-weight:700;transform:scaleX(0.9888);">RELACIONADO CON</span>
<div class="a" style="left:1800px;top:334px;width:89px;height:42px;overflow:hidden;">
<span class="t" style="left:13.49px;top:9.00px;font-size:26.3px;color:#fff;font-weight:700;transform:scaleX(1.0087);">RELACIONADO</span>
</div>
<span class="t" style="left:502.04px;top:382.50px;font-size:20.6px;color:#000;transform:scaleX(0.9551);">2247313392</span>
<span class="t" style="left:619.50px;top:382.50px;font-size:20.6px;color:#000;transform:scaleX(0.8622);">cc</span>
<span class="t" style="left:907.04px;top:382.50px;font-size:20.6px;color:#000;transform:scaleX(0.9641);">114336052</span>
<span class="t" style="left:1161.61px;top:382.50px;font-size:20.6px;color:#000;transform:scaleX(0.8892);">ISABEL MARIA ALCAZAR NUÑEZ</span>
<svg class="a" style="left:904px;top:376px;" width="8" height="8" viewBox="0 0 8 8"><path d="M0 0 H7.500 L0 7.500 Z" fill="#1e8a2e"/></svg>
<span class="t" style="left:502.04px;top:413.50px;font-size:20.6px;color:#000;transform:scaleX(0.9551);">2247313392</span>
<span class="t" style="left:619.50px;top:413.50px;font-size:20.6px;color:#000;transform:scaleX(0.8622);">cc</span>
<span class="t" style="left:907.04px;top:413.50px;font-size:20.6px;color:#000;transform:scaleX(0.9641);">114336052</span>
<span class="t" style="left:1161.61px;top:413.50px;font-size:20.6px;color:#000;transform:scaleX(0.8892);">ISABEL MARIA ALCAZAR NUÑEZ</span>
<svg class="a" style="left:904px;top:407px;" width="8" height="8" viewBox="0 0 8 8"><path d="M0 0 H7.500 L0 7.500 Z" fill="#1e8a2e"/></svg>
<span class="t" style="left:502.04px;top:444.50px;font-size:20.6px;color:#000;transform:scaleX(0.9551);">2247324775</span>
<span class="t" style="left:619.50px;top:444.50px;font-size:20.6px;color:#000;transform:scaleX(0.8622);">cc</span>
<span class="t" style="left:907.04px;top:444.50px;font-size:20.6px;color:#000;transform:scaleX(0.9592);">1193155200</span>
<span class="t" style="left:1162.50px;top:444.50px;font-size:20.6px;color:#000;transform:scaleX(0.8722);">JESSID AGUDELO MORENO</span>
<svg class="a" style="left:904px;top:438px;" width="8" height="8" viewBox="0 0 8 8"><path d="M0 0 H7.500 L0 7.500 Z" fill="#1e8a2e"/></svg>
<svg class="a" style="left:1004px;top:379px;" width="18" height="23" viewBox="0 0 18 23"><path d="M5 6 C5 2 8 1 10 2 C13 0 15 4 13 7 C15 10 15 14 13 17 C13 21 8 21 6 19 C3 20 2 16 4 14 C2 11 3 8 5 6 Z" fill="#000"/></svg>
<svg class="a" style="left:1003px;top:411px;" width="20" height="23" viewBox="0 0 20 23"><path d="M4 4 C6 1 9 2 10 5 C14 4 17 7 16 11 C18 15 16 20 12 20 C8 21 5 20 5 16 C3 13 3 8 4 4 Z" fill="#000"/></svg>
<div class="a" style="left:884.5px;top:371px;width:589.0px;height:70px;border:5px solid #ee0a14;border-radius:4px;width:589px;"></div>
<div class="a" style="left:1889px;top:305px;width:30px;height:649px;background:#666;"></div>
<div class="a" style="left:1893px;top:307px;width:23.5px;height:647px;background:#454545;"></div>
<div class="a" style="left:1893px;top:307px;width:23.5px;height:23px;background:#cfcfcf;"></div>
<svg class="a" style="left:1897px;top:312px;" width="16" height="12" viewBox="0 0 16 12"><path d="M2 10 L8 3 L14 10 Z" fill="#222"/></svg>
<div class="a" style="left:1893px;top:331px;width:23.5px;height:177.5px;background:#c9c9c9;"></div>
<div class="a" style="left:1893px;top:931px;width:23.5px;height:23px;background:#cfcfcf;"></div>
<svg class="a" style="left:1897px;top:936px;" width="16" height="12" viewBox="0 0 16 12"><path d="M2 2.500 L8 9.500 L14 2.500 Z" fill="#222"/></svg>
<div class="a" style="left:0px;top:953.5px;width:1889px;height:33.5px;background:#6a6a6a;"></div>
<svg class="a" style="left:27px;top:962px;" width="10" height="15" viewBox="0 0 10 15"><path d="M8.500 1.500 V13.500 L1.500 7.500 Z" fill="#ededed"/></svg>
<svg class="a" style="left:62px;top:962px;" width="10" height="15" viewBox="0 0 10 15"><path d="M1.500 1.500 V13.500 L8.500 7.500 Z" fill="#a9a9a9"/></svg>
<div class="a" style="left:93.5px;top:972.2px;width:3px;height:3px;background:#f0f0f0;"></div>
<div class="a" style="left:99.5px;top:972.2px;width:3px;height:3px;background:#f0f0f0;"></div>
<div class="a" style="left:105.5px;top:972.2px;width:3px;height:3px;background:#f0f0f0;"></div>
<div class="a" style="left:118.5px;top:953px;width:140px;height:30.5px;background:#fff;border-bottom:2.500px solid #217346;"></div>
<span class="t" style="left:129.99px;top:959.00px;font-size:19.5px;color:#1e7145;transform:scaleX(1.0091);-webkit-text-stroke:0.6px #1e7145;">Reporte_Pso</span>
<span class="t" style="left:270.50px;top:959.00px;font-size:19px;color:#f2f2f2;transform:scaleX(0.9571);">Si</span>
<div class="a" style="left:299.5px;top:957px;width:1px;height:26px;background:#9a9a9a;"></div>
<span class="t" style="left:311.01px;top:959.00px;font-size:19px;color:#f2f2f2;transform:scaleX(0.9918);">Per</span>
<div class="a" style="left:0px;top:986px;width:1919px;height:1.5px;background:#5c5c5c;"></div>
<div class="a" style="left:1600px;top:957.5px;width:290px;height:24px;background:#454545;"></div>
<div class="a" style="left:1866px;top:957.5px;width:24px;height:24px;background:#cfcfcf;"></div>
<svg class="a" style="left:1871px;top:962px;" width="14" height="16" viewBox="0 0 14 16"><path d="M3.500 2 L11 8 L3.500 14 Z" fill="#222"/></svg>
<span class="t" style="left:9.23px;top:996.70px;font-size:15px;color:#3d3c3b;transform:scaleX(1.0711);">Listo</span>
<svg class="a" style="left:70px;top:994px;" width="25" height="21" viewBox="0 0 25 21"><g fill="none" stroke="#3d3c3b" stroke-width="1.400"><path d="M12 18.500 H1.700 V1.700 H22 V8"/><path d="M1.700 5.500 H22 M4.500 9 H10 M4.500 12.500 H8.500 M4.500 16 H8.500"/><circle cx="16.500" cy="14" r="5.700"/></g><circle cx="16.500" cy="14" r="2.800" fill="#3d3c3b"/></svg>
<svg class="a" style="left:117px;top:993px;" width="24" height="23" viewBox="0 0 24 23"><circle cx="10.600" cy="3.200" r="2.500" fill="none" stroke="#3d3c3b" stroke-width="1.400"/>
<g fill="none" stroke-linecap="round" stroke-linejoin="round"><path d="M2.500 6.500 Q10.600 9.500 18.500 6 M10.600 8.500 V12.500 L6.500 19.500 M10.600 12.500 L13 16" stroke="#3d3c3b" stroke-width="4.200"/>
<path d="M2.500 6.500 Q10.600 9.500 18.500 6 M10.600 8.500 V12.500 L6.500 19.500 M10.600 12.500 L13 16" stroke="#c2beba" stroke-width="1.500"/></g>
<path d="M13.300 12.800 L21.800 20.800 M21.800 12.800 L13.300 20.800" stroke="#3d3c3b" stroke-width="1.500" fill="none"/></svg>
<span class="t" style="left:145.40px;top:996.70px;font-size:15px;color:#3d3c3b;transform:scaleX(1.0028);">Accesibilidad: es necesario</span>
<span class="t" style="left:330.50px;top:996.70px;font-size:15px;color:#3d3c3b;transform:scaleX(1.0047);">investigar</span>
<div class="a" style="left:1662.5px;top:1003px;width:12px;height:1.4px;background:#3a3a3a;"></div>
<div class="a" style="left:1683px;top:1002.7px;width:148px;height:2px;background:#1f1f1f;"></div>
<div class="a" style="left:1753px;top:995px;width:8px;height:17px;background:#7c7c7c;"></div>
<div class="a" style="left:1839px;top:1003px;width:12px;height:1.4px;background:#3a3a3a;"></div>
<div class="a" style="left:1844.3px;top:997.5px;width:1.4px;height:12px;background:#3a3a3a;"></div>
<span class="t" style="left:1869.47px;top:996.50px;font-size:15px;color:#3d3c3b;transform:scaleX(1.0317);">100%</span>
<div class="a" style="left:331px;top:455px;width:1304px;height:565px;background:#0c0c0c;box-shadow:0 1px 13px 1px rgba(0,0,0,.30);"></div>
<div class="a" style="left:331px;top:455px;width:1304px;height:44px;background:#2b2b2b;"></div>
<svg class="a" style="left:342px;top:462.7px;" width="24.0" height="25.0" viewBox="0 0 24 25"><path d="M1 1.500 H14.500 C20 1.500 23 5 23 9 C23 12.500 21 15 18 16 L23.500 23 L20.500 24.500 H13 L9.500 19 L8 14.500 L1.500 14 Z" fill="#c9101c"/>
<path d="M14.500 5 C12 5.500 9.500 8 8.500 11 L6 12.500 L8 13.500 L7.500 16 L10.500 14.500 L11.500 16.500 L13 14 C15.500 12 16 8 14.500 5 Z" fill="#2b2b2b"/>
<circle cx="12.300" cy="9.300" r="1.300" fill="#c9101c"/></svg>
<span class="t" style="left:370.99px;top:470.00px;font-size:17.6px;color:#9b9b9b;transform:scaleX(1.0133);">rocketbot.exe - Acceso directo</span>
<svg class="a" style="left:1452px;top:474px;" width="18" height="5" viewBox="0 0 18 5"><path d="M1 2.500 H16" stroke="#9d9d9d" stroke-width="1.200"/></svg>
<svg class="a" style="left:1520px;top:467px;" width="19" height="19" viewBox="0 0 19 19"><rect x="2.500" y="2.500" width="15" height="15" fill="none" stroke="#9d9d9d" stroke-width="1.200"/></svg>
<svg class="a" style="left:1591px;top:467px;" width="19" height="19" viewBox="0 0 19 19"><path d="M2 2 L17 17 M17 2 L2 17" stroke="#9d9d9d" stroke-width="1.200" fill="none"/></svg>
<div class="a" style="left:1609px;top:499px;width:26px;height:521px;background:#171717;"></div>
<svg class="a" style="left:1615px;top:507px;" width="15" height="12" viewBox="0 0 15 12"><path d="M2 9.500 L7.500 3 L13 9.500" fill="none" stroke="#8a8a8a" stroke-width="2.600"/></svg>
<div class="a" style="left:1610px;top:532px;width:24px;height:26px;background:#4d4d4d;"></div>
<span class="t mono" style="left:331.69px;top:503.00px;font-size:20.3px;color:#cccccc;transform:scaleX(0.9038);">","range":"A1:BN64","header":true,"column":"h"}</span>
<span class="t mono" style="left:332.60px;top:527.00px;font-size:20.3px;color:#c9192a;transform:scaleX(0.9038);">Error</span>
<span class="t mono" style="left:332.60px;top:551.00px;font-size:20.3px;color:#cccccc;transform:scaleX(0.9038);">EXCEPTION IN (&lt;string&gt;, L_1364 ""): 'h' is not in list</span>
<span class="t mono" style="left:332.60px;top:575.00px;font-size:20.3px;color:#cccccc;transform:scaleX(0.9038);">EXCEPTION IN (&lt;string&gt;, L_113 ""): 'h' is not in list</span>
<span class="t mono" style="left:331.69px;top:599.00px;font-size:20.3px;color:#cccccc;transform:scaleX(0.9038);">request:alert -  - Se realizó limpieza de datos</span>
<span class="t mono" style="left:331.69px;top:623.00px;font-size:20.3px;color:#cccccc;transform:scaleX(0.9038);">request: FILE savedatafile  {"file_name":"C:/Users/Angela/Desktop/Proveedores/2022/log.txt","type":"add","new_line":</span>
<span class="t mono" style="left:332.60px;top:647.00px;font-size:20.3px;color:#cccccc;transform:scaleX(0.9038);">true,"file_data":"[LimpiezaDatos]: Se eliminaron registros repetidos."}</span>
<span class="t mono" style="left:331.69px;top:671.00px;font-size:20.3px;color:#cccccc;transform:scaleX(0.9038);">request: scripts : stop - -</span>
<svg class="a" style="left:715px;top:562px;" width="230" height="42" viewBox="0 0 230 42"><g fill="none" stroke="#f0101c" stroke-width="5" stroke-linecap="round"><path d="M12 9 C60 8 140 9.500 219 10"/><path d="M9 33 C70 33.500 150 32.500 219 34"/></g></svg>
<div class="a" style="left:0px;top:1020px;width:1919px;height:59px;background:#1d1d1d;"></div>
<div class="a" style="left:0px;top:1020px;width:73px;height:59px;background:#2a2622;"></div>
<div class="a" style="left:1380px;top:1020px;width:539px;height:59px;background:#1e2024;background:linear-gradient(90deg,#1d1d1d,#1e2024 60px);"></div>
<svg class="a" style="left:24px;top:1038px;" width="25" height="24" viewBox="0 0 25 24"><path d="M0.500 3.800 L10.500 2.400 V11.300 H0.500 Z M12 2.200 L24.500 0.500 V11.300 H12 Z M0.500 12.700 H10.500 V21.600 L0.500 20.200 Z M12 12.700 H24.500 V23.500 L12 21.800 Z" fill="#fff"/></svg>
<div class="a" style="left:75px;top:1020px;width:429px;height:59px;background:#3b3b3b;border:2px solid #6a6a6a;border-bottom:none;"></div>
<svg class="a" style="left:88px;top:1036px;" width="28" height="28" viewBox="0 0 28 28"><g fill="none" stroke="#f0f0f0" stroke-width="1.700"><circle cx="17" cy="10.500" r="8"/><path d="M11.500 16.500 L2.500 26"/></g></svg>
<span class="t" style="left:132.00px;top:1042.50px;font-size:21.5px;color:#e6e6e6;transform:scaleX(1.0037);">Buscar</span>
<svg class="a" style="left:526px;top:1036px;" width="28" height="27" viewBox="0 0 28 27"><g fill="none" stroke="#f2f2f2" stroke-width="1.500"><rect x="2" y="7" width="15.500" height="11.500"/><path d="M2 5 V2.200 H17.500 V5 M2 20.500 V23.800 H17.500 V20.500"/><path d="M23.500 2 V9 M23.500 13.500 V24.500"/></g><rect x="22" y="9" width="3.200" height="3.800" fill="#f2f2f2"/></svg>
<div class="a" style="left:587px;top:1076.5px;width:61px;height:3px;background:#f7ecb0;"></div>
<div class="a" style="left:737.5px;top:1076.5px;width:60.5px;height:3px;background:#f7ecb0;"></div>
<div class="a" style="left:963px;top:1076.5px;width:60px;height:3px;background:#f7ecb0;"></div>
<div class="a" style="left:1187px;top:1076.5px;width:61px;height:3px;background:#f7ecb0;"></div>
<div class="a" style="left:1262px;top:1076.5px;width:61px;height:3px;background:#f7ecb0;"></div>
<div class="a" style="left:812px;top:1076.5px;width:48px;height:3px;background:#f7ecb0;"></div>
<div class="a" style="left:860.5px;top:1076.5px;width:12px;height:3px;background:#c9c094;"></div>
<svg class="a" style="left:599px;top:1031px;" width="36.0" height="37.5" viewBox="0 0 24 25"><path d="M1 1.500 H14.500 C20 1.500 23 5 23 9 C23 12.500 21 15 18 16 L23.500 23 L20.500 24.500 H13 L9.500 19 L8 14.500 L1.500 14 Z" fill="#cc0a1e"/>
<path d="M14.500 5 C12 5.500 9.500 8 8.500 11 L6 12.500 L8 13.500 L7.500 16 L10.500 14.500 L11.500 16.500 L13 14 C15.500 12 16 8 14.500 5 Z" fill="#1d1d1d"/>
<circle cx="12.300" cy="9.300" r="1.300" fill="#cc0a1e"/></svg>
<svg class="a" style="left:674px;top:1032px;" width="36" height="36" viewBox="0 0 36 36"><circle cx="18" cy="18" r="16" fill="#262329" stroke="#e6e6e6" stroke-width="2"/>
<g fill="#cfcfcf"><path d="M18 17 C14 14 13.500 8 17.500 4.500 C16 9 18 13 22 14 C20 14.500 18.500 15.500 18 17 Z"/>
<path d="M19 18.500 C23.500 16.500 29 19 30 24 C27 20.500 22.500 20.500 19.500 23.500 C20 21.500 19.800 20 19 18.500 Z"/>
<path d="M17 19.500 C16.500 24.500 11.500 28 6.500 26.500 C11 25.500 13.500 22 12.500 17.500 C14 19 15.500 19.500 17 19.500 Z"/></g></svg>
<svg class="a" style="left:750px;top:1035px;" width="35" height="30" viewBox="0 0 35 30"><path d="M1.500 3 C1.500 2 2.300 1.500 3 1.500 H12 L15 4.500 H31.500 C32.500 4.500 33 5.200 33 6 V26 H1.500 Z" fill="#e8a92c"/>
<path d="M1.500 8 H33 V26.500 C33 27.300 32.500 28 31.500 28 H3 C2.200 28 1.500 27.300 1.500 26.500 Z" fill="#fcd566"/>
<path d="M8.500 28.500 V19 C8.500 18 9.200 17.500 10 17.500 H24.500 C25.300 17.500 26 18 26 19 V28.500 H21.500 V22 H13 V28.500 Z" fill="#3a96dd"/></svg>
<svg class="a" style="left:822px;top:1031px;" width="38" height="37" viewBox="0 0 38 37"><path d="M12 3.500 L32.500 6 L33.500 27 L26 34 L4 28.500 Z" fill="#dfeef5"/>
<path d="M12 3.500 L31 6 L24 31 L3 26.500 Z" fill="#66b3c6"/>
<path d="M12 3.500 L31 6 L29 13 L9.500 10 Z" fill="#bfe0ea"/>
<path d="M5 22 L24.500 26.500 L24 31 L3 26.500 Z" fill="#3c8296"/>
<path d="M31 6 L33.500 27 L26 34 L24 31 Z" fill="#f3f0e6"/>
<path d="M12 3 L32 5.500" stroke="#8f9aa0" stroke-width="2.200" stroke-dasharray="1.500 1.500"/></svg>
<svg class="a" style="left:898px;top:1031px;" width="38" height="38" viewBox="0 0 38 38"><circle cx="19" cy="19" r="18" fill="#db4437"/>
<path d="M19 19 L3.400 10 A18 18 0 0 0 19.500 37 L27.500 22 Z" fill="#1da462"/>
<path d="M19 19 L27.500 23 L19.500 37 A18 18 0 0 0 34.600 10 H19 Z" fill="#ffcd40"/>
<path d="M19 10 H34.600 A18 18 0 0 0 3.400 10 L11.200 23.500 Z" fill="#db4437"/>
<circle cx="19" cy="19" r="8.600" fill="#fff"/><circle cx="19" cy="19" r="6.700" fill="#4285f4"/></svg>
<svg class="a" style="left:972px;top:1029px;" width="40" height="40" viewBox="0 0 40 40"><defs><radialGradient id="ffg" cx="0.650" cy="0.200" r="0.900"><stop offset="0" stop-color="#fff36b"/><stop offset="0.350" stop-color="#ffa436"/><stop offset="0.700" stop-color="#ff3750"/><stop offset="1" stop-color="#e31587"/></radialGradient></defs>
<path d="M25 2.500 C29 5 31.500 8.500 32 12 C36 14 38 18.500 37.500 23 C36.500 32 29 38.500 20 38.500 C10 38.500 2.500 31 2.500 21.500 C2.500 16 5 12 8.500 9.500 C8.500 11.500 9 13 10 14 C12 10.500 16 9 19 9.500 C21 7.500 23.500 5.500 25 2.500 Z" fill="url(#ffg)"/>
<circle cx="21" cy="21.500" r="8.500" fill="#7a3df0"/><path d="M13 17.500 C15.500 14.500 21 14 24.500 16.500 C21.500 16.500 20 18 20.500 20 C16.500 21 14 20 13 17.500 Z" fill="#ff980e"/>
<path d="M12.500 22 C14 28 21 30.500 26.500 27 C29 25.500 30 23 30 21 C31.500 26 28.500 32 22 33 C16 33.500 12 28.500 12.500 22 Z" fill="#ff5a36"/></svg>
<svg class="a" style="left:1049px;top:1031px;" width="37" height="37" viewBox="0 0 37 37"><path d="M3 5 L6 2.500 H24 L27.500 6 V34.500 H3 Z" fill="#f4f4f0" stroke="#b8b8b0" stroke-width="1"/>
<rect x="5.500" y="12" width="21" height="21" fill="#8ed046"/>
<path d="M6 2.500 V6 M9 2.500 V6 M12 2.500 V6 M15 2.500 V6 M18 2.500 V6 M21 2.500 V6" stroke="#777" stroke-width="1.200"/>
<ellipse cx="14.500" cy="13" rx="4.500" ry="3.500" fill="#5aa02c"/><circle cx="13" cy="11.500" r="1.700" fill="#fff"/><circle cx="17" cy="11.500" r="1.700" fill="#fff"/><circle cx="13.300" cy="11.800" r="0.800" fill="#000"/><circle cx="17.300" cy="11.800" r="0.800" fill="#000"/>
<path d="M9 18 H23 M12 22 C10 24 12 27 15 25 M14 29 H22 M17 27 V31" stroke="#1e4d0f" stroke-width="1.600" fill="none"/>
<path d="M24 26 L33 4 L35.500 5 L27 27.500 L24 30 Z" fill="#f2b830" stroke="#a87810" stroke-width="0.800"/></svg>
<svg class="a" style="left:1123px;top:1033px;" width="37" height="34" viewBox="0 0 37 34"><path d="M10 1 H34 C35.500 1 36 2 36 3 V9.500 H10 Z" fill="#41a5ee"/><rect x="10" y="9.500" width="26" height="8" fill="#2b7cd3"/><rect x="10" y="17.500" width="26" height="8" fill="#185abd"/>
<path d="M10 25.500 H36 V31 C36 32.500 35 33 34 33 H12 C10.500 33 10 32 10 31 Z" fill="#103f91"/>
<rect x="1" y="8" width="18.500" height="18.500" rx="2" fill="#185abd"/>
<text x="10.200" y="22.500" font-family="Liberation Sans, sans-serif" font-weight="700" font-size="14" fill="#fff" text-anchor="middle">W</text></svg>
<svg class="a" style="left:1198px;top:1031px;" width="38" height="38" viewBox="0 0 38 38"><circle cx="19" cy="19" r="18" fill="#db4437"/>
<path d="M19 19 L3.400 10 A18 18 0 0 0 19.500 37 L27.500 22 Z" fill="#1da462"/>
<path d="M19 19 L27.500 23 L19.500 37 A18 18 0 0 0 34.600 10 H19 Z" fill="#ffcd40"/>
<path d="M19 10 H34.600 A18 18 0 0 0 3.400 10 L11.200 23.500 Z" fill="#db4437"/>
<circle cx="19" cy="19" r="8.600" fill="#fff"/><circle cx="19" cy="19" r="6.700" fill="#4285f4"/></svg>
<svg class="a" style="left:1214px;top:1047px;" width="25" height="25" viewBox="0 0 25 25"><circle cx="12.500" cy="12.500" r="10.500" fill="#6b6a4e"/><path d="M6 17 C8 9 12 6 15 9 C18 8 20 12 19 17 C16 21 9 21 6 17 Z" fill="#8f8a74"/><path d="M4 10 C6 5 10 3 14 3.500 C10 6 7 9 5.500 14 Z" fill="#7e9a4a"/></svg>
<svg class="a" style="left:1273px;top:1033px;" width="37" height="34" viewBox="0 0 37 34"><path d="M10 1 H34 C35.500 1 36 2 36 3 V9.500 H10 Z" fill="#33c481"/><rect x="10" y="9.500" width="26" height="8" fill="#21a366"/><rect x="10" y="17.500" width="26" height="8" fill="#107c41"/>
<path d="M10 25.500 H36 V31 C36 32.500 35 33 34 33 H12 C10.500 33 10 32 10 31 Z" fill="#185c37"/>
<rect x="1" y="8" width="18.500" height="18.500" rx="2" fill="#107c41"/>
<text x="10.200" y="22.500" font-family="Liberation Sans, sans-serif" font-weight="700" font-size="14" fill="#fff" text-anchor="middle">X</text></svg>
<svg class="a" style="left:1405px;top:1030px;" width="42" height="39" viewBox="0 0 42 39"><defs><linearGradient id="sun" x1="0" y1="0" x2="0" y2="1"><stop offset="0" stop-color="#f6b21c"/><stop offset="1" stop-color="#ef7a1a"/></linearGradient>
<linearGradient id="cl" x1="0" y1="0" x2="0" y2="1"><stop offset="0" stop-color="#e9f0fb"/><stop offset="1" stop-color="#a9c3ec"/></linearGradient></defs>
<circle cx="28" cy="15.500" r="9" fill="url(#sun)"/><circle cx="33.600" cy="6.200" r="4.600" fill="#d63a2b"/>
<path d="M9 36.700 C4.500 36.700 2 33.800 2 30.500 C2 27 5 24.300 8.500 24.800 C8.500 18 13.500 13.300 19 13.300 C24 13.300 27.500 16.500 28.500 21 C30 20.500 32 20.700 33.500 21.500 C36.500 23 38 26 38 29.500 C38 33.500 35.500 36.700 31.500 36.700 Z" fill="url(#cl)"/></svg>
<span class="t" style="left:1454.04px;top:1041.60px;font-size:20.5px;color:#f2f2f2;transform:scaleX(0.9644);">21°C</span>
<svg class="a" style="left:1535px;top:1043px;" width="22" height="14" viewBox="0 0 22 14"><path d="M2 11.500 L11 2.500 L20 11.500" fill="none" stroke="#f2f2f2" stroke-width="1.700"/></svg>
<svg class="a" style="left:1570px;top:1036px;" width="25" height="27" viewBox="0 0 25 27"><path d="M2 25.500 C5 17 10 9 22.500 1.500 C23.500 8 20 16 12.500 20.500 C9 22 5.500 22.500 4 23.500 Z" fill="#a77be0"/>
<path d="M2 25.500 C6 17 12 10 21 3.500" stroke="#e8d8ff" stroke-width="1" fill="none"/><path d="M8 13 L11 17 M12 9.500 L15.500 14 M16 6.500 L19 10" stroke="#7c4fc0" stroke-width="0.800"/></svg>
<svg class="a" style="left:1606px;top:1042px;" width="26" height="17" viewBox="0 0 26 17"><rect x="1.500" y="2" width="20" height="12.500" rx="1.500" fill="none" stroke="#f2f2f2" stroke-width="1.500"/><rect x="3.500" y="4" width="11.500" height="8.500" fill="#f2f2f2"/><rect x="22" y="5.500" width="2.300" height="5.500" fill="#f2f2f2"/></svg>
<svg class="a" style="left:1643px;top:1040px;" width="24" height="23" viewBox="0 0 24 23"><g fill="none" stroke-width="1.700"><path d="M3 20 C3 11 10 4 19.500 4" stroke="#8c8c8c"/><path d="M8 20 C8 14 13 9 19.500 9" stroke="#f2f2f2"/><path d="M13 20 C13 16.500 16 14 19.500 14" stroke="#f2f2f2"/></g><circle cx="19" cy="19.500" r="1.700" fill="#f2f2f2"/></svg>
<span class="t" style="left:1683.75px;top:1043.00px;font-size:17.3px;color:#f2f2f2;transform:scaleX(0.8502);">ESP</span>
<span class="t" style="left:1738.77px;top:1029.50px;font-size:17.3px;color:#f2f2f2;transform:scaleX(1.0265);">12:12 p. m.</span>
<span class="t" style="left:1736.63px;top:1056.70px;font-size:17.3px;color:#f2f2f2;transform:scaleX(1.0733);">15/03/2023</span>
<svg class="a" style="left:1857px;top:1036px;" width="28" height="28" viewBox="0 0 28 28"><path d="M1.500 2 H24.500 V19 H13.500 L8.500 24 V19 H1.500 Z" fill="#f2f2f2"/><path d="M6 7 H20 M6 10.500 H20 M6 14 H15" stroke="#1e2024" stroke-width="1.300"/>
<circle cx="20.500" cy="19.500" r="5.300" fill="#1e2024" stroke="#f2f2f2" stroke-width="1.300"/><path d="M22.500 16.500 C19.500 17 18.500 20.500 21 22.500 C18 22.500 16.500 19 18.500 17 C19.500 16 21.500 15.800 22.500 16.500 Z" fill="#f2f2f2"/></svg>
<div class="a" style="left:1911.5px;top:1026px;width:1.2px;height:53px;background:#8a8a8a;"></div>
</body></html>
